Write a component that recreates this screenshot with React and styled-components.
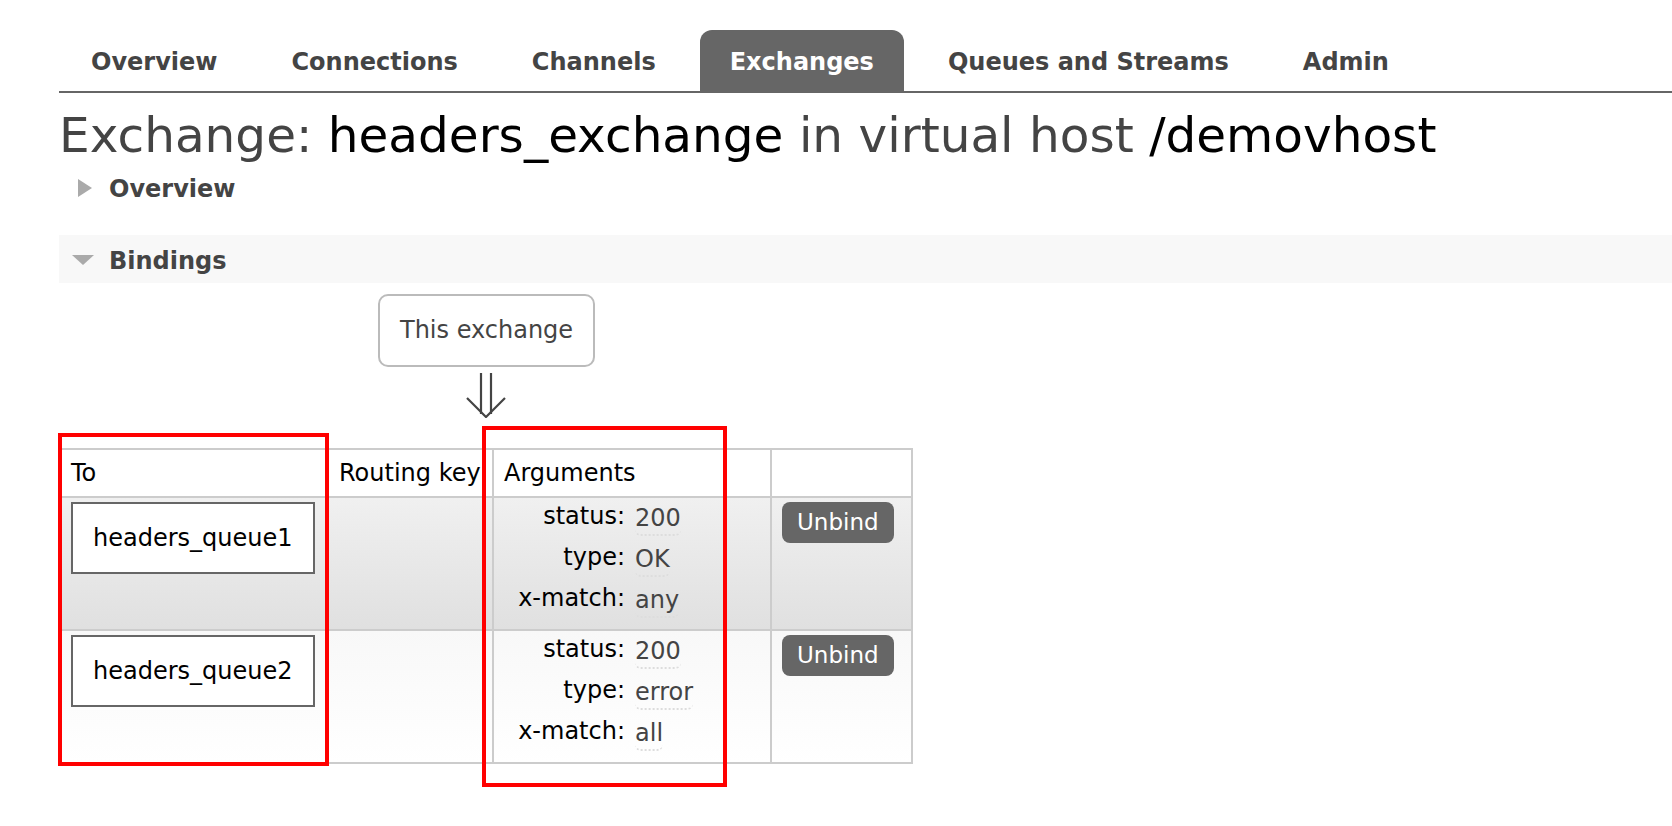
import React from 'react';
import styled, { createGlobalStyle } from 'styled-components';

const GlobalStyle = createGlobalStyle`
  html, body { margin: 0; padding: 0; background: #fff; }
  body {
    font-family: "DejaVu Sans", Verdana, sans-serif;
    font-size: 24px;
    color: #000;
  }
`;

const Page = styled.div`
  padding: 30px 0 60px 59px;
`;

const Tabs = styled.ul`
  list-style: none;
  margin: 0;
  padding: 0 0 0 2px;
  display: flex;
  gap: 14px;
  border-bottom: 2px solid #666;
`;

const Tab = styled.li`
  height: 61px;
  box-sizing: border-box;
  padding: 4px 30px 0;
  line-height: 57px;
  font-weight: bold;
  font-size: 24px;
  white-space: nowrap;
  color: ${(p) => (p.$active ? '#fff' : '#444')};
  background: ${(p) => (p.$active ? '#666' : 'transparent')};
  border-radius: 12px 12px 0 0;
`;

const Title = styled.h1`
  margin: 14px 0 0;
  font-size: 48.5px;
  font-weight: normal;
  line-height: 56px;
  color: #444;
  white-space: nowrap;
`;

const Name = styled.span`
  color: #000;
`;

const SectionHeader = styled.div`
  display: flex;
  align-items: center;
  box-sizing: border-box;
  height: 48px;
  padding-top: ${(p) => (p.$open ? 3 : 0)}px;
  margin-top: ${(p) => p.$top}px;
  background: ${(p) => (p.$open ? '#f8f8f8' : 'transparent')};
  font-weight: bold;
  color: #444;
  line-height: 28px;
`;

const Toggle = styled.span`
  width: 50px;
  flex: none;
  display: flex;
  align-items: center;
  &::before {
    content: '';
    display: block;
    margin-left: ${(p) => (p.$open ? 13 : 19)}px;
    margin-top: -2px;
    width: 0;
    height: 0;
    ${(p) =>
      p.$open
        ? `border-top: 10px solid #aaa; border-left: 11px solid transparent; border-right: 11px solid transparent;`
        : `border-left: 14px solid #aaa; border-top: 9.5px solid transparent; border-bottom: 9.5px solid transparent;`}
  }
`;

const ExchangeBox = styled.div`
  margin: 11px 0 0 319px;
  width: fit-content;
  padding: 20px;
  border: 2px solid #bbb;
  border-radius: 10px;
  color: #444;
  line-height: 29px;
`;

const Arrow = styled.svg`
  display: block;
  margin: 5px 0 0 407px;
`;

const TableArea = styled.div`
  position: relative;
  margin-top: 30px;
  width: fit-content;
`;

const List = styled.table`
  border-collapse: collapse;
  table-layout: fixed;
  width: 852px;
`;

const Th = styled.th`
  text-align: left;
  font-weight: normal;
  padding: 9px 10px;
  line-height: 28px;
  border: 2px solid #ccc;
  background: #fff;
  white-space: nowrap;
`;

const Row = styled.tr`
  & > td {
    background: ${(p) =>
      p.$alt === 1
        ? 'linear-gradient(to bottom, #f0f0f0 0%, #e0e0e0 100%)'
        : 'linear-gradient(to bottom, #f8f8f8 0%, #ffffff 100%)'};
  }
`;

const Td = styled.td`
  padding: 4px 10px 4px;
  vertical-align: top;
  border: 2px solid #ccc;
  line-height: 28px;
`;

const QueueLink = styled.span`
  display: inline-block;
  padding: 20px;
  border: 2px solid #666;
  background: #fff;
  line-height: 28px;
  white-space: nowrap;
`;

const Args = styled.div`
  display: grid;
  grid-template-columns: 121px auto;
  column-gap: 10px;
  justify-content: start;
`;

const ArgKey = styled.div`
  text-align: right;
  line-height: 28px;
  padding-bottom: 13px;
  white-space: nowrap;
`;

const ArgVal = styled.div`
  line-height: 28px;
  padding-top: 2px;
  padding-bottom: 11px;
  color: #444;
`;

const Abbr = styled.span`
  border-bottom: 2px dotted #ddd;
  border-radius: 6px;
  padding-bottom: 2px;
`;

const UnbindButton = styled.button`
  font-family: "DejaVu Sans", Verdana, sans-serif;
  font-size: 23px;
  line-height: 29px;
  padding: 6px 15px;
  border: none;
  border-radius: 8px;
  background: #666;
  color: #fff;
  cursor: pointer;
`;

const Annotation = styled.div`
  position: absolute;
  box-sizing: border-box;
  border: 4px solid #ff0000;
  left: ${(p) => p.$x}px;
  top: ${(p) => p.$y}px;
  width: ${(p) => p.$w}px;
  height: ${(p) => p.$h}px;
  pointer-events: none;
`;

const tabs = ['Overview', 'Connections', 'Channels', 'Exchanges', 'Queues and Streams', 'Admin'];

const bindings = [
  { queue: 'headers_queue1', args: [['status', '200'], ['type', 'OK'], ['x-match', 'any']] },
  { queue: 'headers_queue2', args: [['status', '200'], ['type', 'error'], ['x-match', 'all']] },
];

export default function App() {
  return (
    <>
      <GlobalStyle />
      <Page>
        <Tabs>
          {tabs.map((t) => (
            <Tab key={t} $active={t === 'Exchanges'}>{t}</Tab>
          ))}
        </Tabs>

        <Title>
          Exchange: <Name>headers_exchange</Name> in virtual host <Name>/demovhost</Name>
        </Title>

        <SectionHeader $top={2}>
          <Toggle />
          Overview
        </SectionHeader>

        <SectionHeader $top={22} $open>
          <Toggle $open />
          Bindings
        </SectionHeader>

        <ExchangeBox>This exchange</ExchangeBox>
        <Arrow width="40" height="46" viewBox="0 0 40 46">
          <g stroke="#444" strokeWidth="2.2" fill="none" strokeLinecap="butt">
            <line x1="15" y1="1" x2="15" y2="42" />
            <line x1="25" y1="1" x2="25" y2="42" />
            <polyline points="1,26 20,45 39,26" />
          </g>
        </Arrow>

        <TableArea>
          <List>
            <colgroup>
              <col style={{ width: 268 }} />
              <col style={{ width: 165 }} />
              <col style={{ width: 278 }} />
              <col style={{ width: 141 }} />
            </colgroup>
            <thead>
              <tr>
                <Th>To</Th>
                <Th>Routing key</Th>
                <Th>Arguments</Th>
                <Th></Th>
              </tr>
            </thead>
            <tbody>
              {bindings.map((b, i) => (
                <Row key={b.queue} $alt={i % 2 === 0 ? 1 : 2}>
                  <Td>
                    <QueueLink>{b.queue}</QueueLink>
                  </Td>
                  <Td></Td>
                  <Td>
                    <Args>
                      {b.args.map(([k, v]) => (
                        <React.Fragment key={k}>
                          <ArgKey>{k}:</ArgKey>
                          <ArgVal><Abbr>{v}</Abbr></ArgVal>
                        </React.Fragment>
                      ))}
                    </Args>
                  </Td>
                  <Td>
                    <UnbindButton>Unbind</UnbindButton>
                  </Td>
                </Row>
              ))}
            </tbody>
          </List>
          <Annotation $x={-1} $y={-15} $w={271} $h={333} />
          <Annotation $x={423} $y={-22} $w={245} $h={361} />
        </TableArea>
      </Page>
    </>
  );
}
